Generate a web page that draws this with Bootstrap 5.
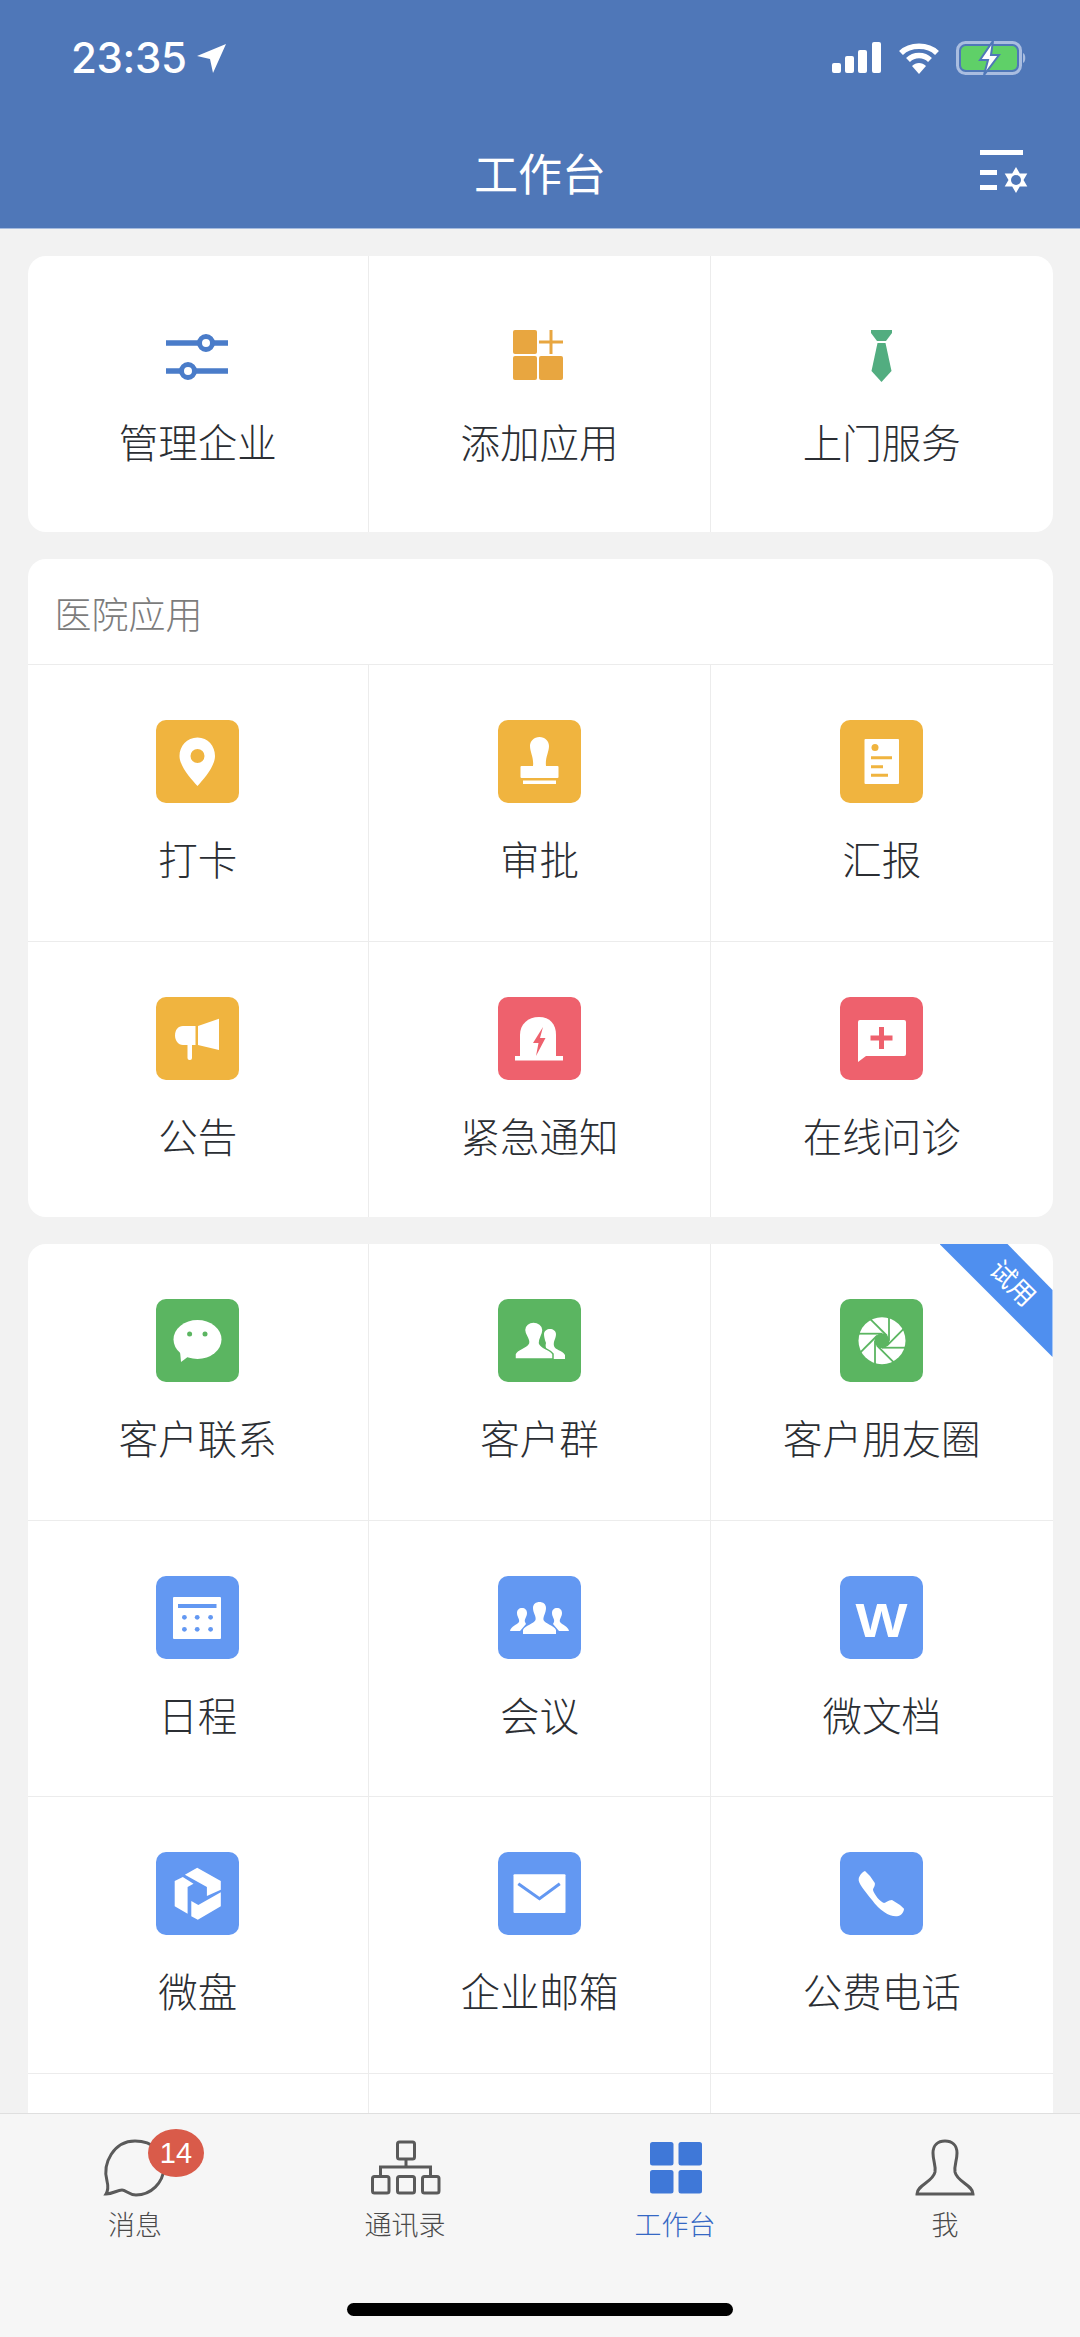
<!DOCTYPE html>
<html lang="zh">
<head>
    <meta charset="UTF-8">
    <meta name="viewport" content="width=device-width, initial-scale=1.0">
    <title>工作台</title>
    <link rel="stylesheet" href="https://cdn.jsdelivr.net/npm/bootstrap@5.3.0/dist/css/bootstrap.min.css">
    <style>
        html, body { height: 2337px; overflow: hidden; }
        body { background: #f2f2f2; font-family: "Liberation Sans", "Noto Sans CJK SC", sans-serif; color: #3b3e43; }
        svg { display: block; }
        .app-shell { height: 2337px; }
        .top-head { background: #4f77b8; height: 229px; border-bottom: 1px solid #a5bbde; color: #fff; }
        .status-row { height: 116px; padding: 0 52px 0 71px; }
        .clock { font: 500 42px/1 Inter, "Liberation Sans", sans-serif; letter-spacing: -.3px; }
        .title-row { height: 112px; display: grid; grid-template-columns: 1fr auto 1fr; padding: 0 52px; }
        .title-row h1 { font: 400 44px/1 "Noto Sans CJK SC", sans-serif; margin: 0; }
        .page-body { padding: 27px 27.5px 0; min-height: 0; overflow: hidden; }
        .work-card { background: #fff; border-radius: 18px; overflow: hidden; margin-bottom: 27px; position: relative; flex-shrink: 0; }
        .card-head { height: 105px; padding: 3px 0 0 27px; font: 300 37px/102px "Noto Sans CJK SC", sans-serif; color: #7c7c7c; }
        .cell-line { height: 276.5px; border-top: 1px solid #ececec; }
        .cell-line.no-line { border-top: 0; }
        .cell-line.short-line { height: 276px; }
        .cell-line.first-line { height: 275.5px; }
        .cell-item { padding-top: 55px; border-right: 1px solid #ececec; text-align: center; }
        .cell-item:last-child { border-right: 0; }
        .app-ico { width: 83px; height: 83px; border-radius: 10px; margin: 0 auto 30px; }
        .plain-ico { margin-bottom: 22px; }
        .cell-name { font: 300 39.5px/50px "Noto Sans CJK SC", sans-serif; color: #2b2e33; }
        .ico-yellow { background: #f0b43f; }
        .ico-red { background: #ee616d; }
        .ico-green { background: #5bb561; }
        .ico-blue { background: #6398f2; }
        .try-tag { position: absolute; top: 0; right: 0; width: 113px; height: 113px; background: #4f8fef; clip-path: polygon(0 0, 68px 0, 113px 46px, 113px 113px); }
        .try-tag span { position: absolute; left: 44px; top: 25px; width: 60px; text-align: center; color: #fff; font: 400 26px/26px "Noto Sans CJK SC", sans-serif; transform: rotate(45deg); white-space: nowrap; }
        .tab-bar { background: #f6f6f6; border-top: 1px solid #dfdfdf; height: 224px; flex-shrink: 0; }
        .tab-item { padding-top: 21px; position: relative; text-align: center; color: #4a4a4a; font: 300 27px/36px "Noto Sans CJK SC", sans-serif; }
        .tab-item svg { margin: 0 auto 6px; }
        .tab-on { color: #3568c4; }
        .tab-count { position: absolute; top: 15px; left: 148px; width: 56px; height: 48px; border-radius: 50%; background: #d95b4a; color: #fff; font: 400 29px/48px "Liberation Sans", sans-serif; }
        .home-bar { width: 386px; height: 13px; border-radius: 7px; background: #000; margin: 61px auto 0; }
    </style>
</head>
<body>
<div class="app-shell d-flex flex-column">

    <!-- Header -->
    <header class="top-head flex-shrink-0">
        <div class="status-row d-flex align-items-center justify-content-between">
            <div class="d-flex align-items-center gap-2">
                <span class="clock">23:35</span>
                <svg width="32" height="32" viewBox="0 0 32 32"><path d="M31 2 L2 14 L15 17 L18 31 Z" fill="#fff"/></svg>
            </div>
            <div class="d-flex align-items-center">
                <svg width="50" height="32" viewBox="0 0 50 32" class="me-3" fill="#fff">
                    <rect x="0" y="21" width="9" height="10" rx="2"/><rect x="13" y="14" width="9" height="17" rx="2"/><rect x="26" y="8" width="9" height="23" rx="2"/><rect x="40" y="0" width="9" height="31" rx="2"/>
                </svg>
                <svg width="42" height="32" viewBox="0 0 42 32" class="me-3" fill="none" stroke="#fff" stroke-width="5.500">
                    <path d="M3 11 C12 2 30 2 39 11"/><path d="M10 18 C16 12 26 12 32 18"/><path d="M21 32 L14 24 C18 20 24 20 28 24 Z" fill="#fff" stroke="none"/>
                </svg>
                <svg width="72" height="34" viewBox="0 0 72 34">
                    <rect x="1.500" y="1.500" width="63" height="31" rx="8" fill="none" stroke="#a9bde0" stroke-width="3"/>
                    <path d="M67 12 C70 13 70 21 67 22 Z" fill="#a9bde0"/>
                    <rect x="5" y="5" width="56" height="24" rx="5" fill="#5fd068"/>
                    <path d="M37 0 L24 19 L32 19 L28 34 L43 14 L35 14 Z" fill="#fff" stroke="#4f77b8" stroke-width="2"/>
                </svg>
            </div>
        </div>
        <div class="title-row align-items-center">
            <span></span>
            <h1>工作台</h1>
            <svg class="ms-auto" width="50" height="48" viewBox="0 0 50 48" fill="#fff">
                <rect x="2" y="2" width="43" height="5"/><rect x="2" y="22" width="17" height="5"/><rect x="2" y="37" width="17" height="5"/>
                <path d="M38 19 L41.800 25.500 L49.300 25.500 L45.500 32 L49.300 38.500 L41.800 38.500 L38 45 L34.200 38.500 L26.700 38.500 L30.500 32 L26.700 25.500 L34.200 25.500 Z"/>
                <circle cx="38" cy="32" r="5" fill="#4f77b8"/>
            </svg>
        </div>
    </header>

    <!-- Content -->
    <main class="page-body flex-grow-1 d-flex flex-column">

        <section class="work-card">
            <div class="row g-0 cell-line no-line short-line">
                <div class="col-4 cell-item">
                    <div class="app-ico plain-ico">
                        <svg width="83" height="83" viewBox="0 0 83 83" fill="none" stroke="#4a7cc9">
                            <path d="M10 32 H72 M10 60 H72" stroke-width="5.500"/>
                            <circle cx="50" cy="32" r="6.500" fill="#fff" stroke-width="5"/>
                            <circle cx="32" cy="60" r="6.500" fill="#fff" stroke-width="5"/>
                        </svg>
                    </div>
                    <div class="cell-name">管理企业</div>
                </div>
                <div class="col-4 cell-item">
                    <div class="app-ico plain-ico">
                        <svg width="83" height="83" viewBox="0 0 83 83" fill="#e8a640">
                            <rect x="15" y="19" width="24" height="24" rx="2"/><rect x="15" y="45" width="24" height="24" rx="2"/><rect x="41" y="45" width="24" height="24" rx="2"/>
                            <path d="M41 29.500 H65 V32.500 H41 Z M51.500 19 H54.500 V43 H51.500 Z"/>
                        </svg>
                    </div>
                    <div class="cell-name">添加应用</div>
                </div>
                <div class="col-4 cell-item">
                    <div class="app-ico plain-ico">
                        <svg width="83" height="83" viewBox="0 0 83 83" fill="#52ad80">
                            <path d="M31 19 H52 L52 22 L46 30 H37 L31 22 Z"/>
                            <path d="M37.500 32 H45.500 L51.500 60 L41.500 71 L31.500 60 Z"/>
                        </svg>
                    </div>
                    <div class="cell-name">上门服务</div>
                </div>
            </div>
        </section>

        <section class="work-card">
            <div class="card-head">医院应用</div>
            <div class="row g-0 cell-line">
                <div class="col-4 cell-item">
                    <div class="app-ico ico-yellow">
                        <svg width="83" height="83" viewBox="0 0 83 83"><path fill="#fff" fill-rule="evenodd" d="M41.500 17.500 C31 17.500 23.500 26 23.500 36 C23.500 46 35 59 41.500 66 C48 59 59 46 59 36 C59 26 52 17.500 41.500 17.500 Z M41.500 29 A7 7 0 1 1 41.500 43 A7 7 0 1 1 41.500 29 Z"/></svg>
                    </div>
                    <div class="cell-name">打卡</div>
                </div>
                <div class="col-4 cell-item">
                    <div class="app-ico ico-yellow">
                        <svg width="83" height="83" viewBox="0 0 83 83" fill="#fff">
                            <path d="M41.500 17 C36 17 32 21 32 26 C32 32 36 38 35 46 H48 C47 38 51 32 51 26 C51 21 47 17 41.500 17 Z"/>
                            <rect x="22.500" y="46" width="38" height="12" rx="1"/><rect x="25" y="60.500" width="33" height="3.500"/>
                        </svg>
                    </div>
                    <div class="cell-name">审批</div>
                </div>
                <div class="col-4 cell-item">
                    <div class="app-ico ico-yellow">
                        <svg width="83" height="83" viewBox="0 0 83 83">
                            <rect x="24.500" y="19" width="34.500" height="45" rx="1" fill="#fff"/>
                            <circle cx="35" cy="27.500" r="3.500" fill="#f0b43f"/>
                            <path d="M31 37.700 H52 M31 46.700 H43 M31 55.300 H48" stroke="#f0b43f" stroke-width="3"/>
                        </svg>
                    </div>
                    <div class="cell-name">汇报</div>
                </div>
            </div>
            <div class="row g-0 cell-line">
                <div class="col-4 cell-item">
                    <div class="app-ico ico-yellow">
                        <svg width="83" height="83" viewBox="0 0 83 83" fill="#fff">
                            <path d="M27 29 H39.500 V48 H27 C22 48 19 43 19 38.500 C19 33 22 29 27 29 Z"/>
                            <path d="M42 29 L63 21.700 V53 L42 48 Z"/>
                            <rect x="31.500" y="46" width="4.500" height="17" rx="2"/>
                        </svg>
                    </div>
                    <div class="cell-name">公告</div>
                </div>
                <div class="col-4 cell-item">
                    <div class="app-ico ico-red">
                        <svg width="83" height="83" viewBox="0 0 83 83">
                            <path fill="#fff" d="M22 59 V38 C22 27 30 20 41 20 C52 20 58 27 58 38 V59 Z"/>
                            <rect x="17" y="59" width="48" height="4.500" fill="#fff"/>
                            <path fill="#ee616d" d="M45 30 L35 46 L40.500 46 L38 59 L47.500 41 L42 41 Z"/>
                        </svg>
                    </div>
                    <div class="cell-name">紧急通知</div>
                </div>
                <div class="col-4 cell-item">
                    <div class="app-ico ico-red">
                        <svg width="83" height="83" viewBox="0 0 83 83">
                            <path fill="#fff" d="M20 23 H64 A2 2 0 0 1 66 25 V57 A2 2 0 0 1 64 59 H26 L18 65 V25 A2 2 0 0 1 20 23 Z"/>
                            <path fill="#ee616d" d="M39 30 H44 V38.500 H52.500 V43.500 H44 V52 H39 V43.500 H30.500 V38.500 H39 Z"/>
                        </svg>
                    </div>
                    <div class="cell-name">在线问诊</div>
                </div>
            </div>
        </section>

        <section class="work-card">
            <div class="row g-0 cell-line no-line first-line">
                <div class="col-4 cell-item">
                    <div class="app-ico ico-green">
                        <svg width="83" height="83" viewBox="0 0 83 83">
                            <ellipse cx="41.500" cy="40.500" rx="24" ry="19.500" fill="#fff"/>
                            <path fill="#fff" d="M24 52 L25 63 L33 57 Z"/>
                            <circle cx="33.600" cy="35" r="2.500" fill="#5bb561"/><circle cx="49" cy="35" r="2.500" fill="#5bb561"/>
                        </svg>
                    </div>
                    <div class="cell-name">客户联系</div>
                </div>
                <div class="col-4 cell-item">
                    <div class="app-ico ico-green">
                        <svg width="83" height="83" viewBox="0 0 83 83" fill="#fff">
                            <path d="M50 60 V56 C50 52 46.500 48.500 48 44 C46.500 40 46 37 46 35 C46 32 49 30 52 30 C55 30 58 32 58 35 C58 40 55 42 56 47 C57 51 64 51 67 56 V60 Z"/>
                            <path stroke="#5bb561" stroke-width="1.500" d="M17 60 V55 C19 49 29 49 30.500 44 C31.500 40 26.500 36 26.500 31 C26.500 26 31 23 35.500 23 C40 23 45 26 45 31 C45 36 41 40 41.500 44 C42.500 49 52 50 55 55 V60 Z"/>
                        </svg>
                    </div>
                    <div class="cell-name">客户群</div>
                </div>
                <div class="col-4 cell-item">
                    <div class="app-ico ico-green">
                        <svg width="83" height="83" viewBox="0 0 83 83">
                            <circle cx="42" cy="41.700" r="23.500" fill="#fff"/>
                            <g stroke="#5bb561" stroke-width="1.800">
                                <path d="M49 41.700 V16"/>
                                <path d="M49 41.700 V16" transform="rotate(45 42 41.700)"/>
                                <path d="M49 41.700 V16" transform="rotate(90 42 41.700)"/>
                                <path d="M49 41.700 V16" transform="rotate(135 42 41.700)"/>
                                <path d="M49 41.700 V16" transform="rotate(180 42 41.700)"/>
                                <path d="M49 41.700 V16" transform="rotate(225 42 41.700)"/>
                                <path d="M49 41.700 V16" transform="rotate(270 42 41.700)"/>
                                <path d="M49 41.700 V16" transform="rotate(315 42 41.700)"/>
                            </g>
                            <circle cx="42" cy="41.700" r="7.500" fill="#5bb561"/>
                        </svg>
                    </div>
                    <div class="cell-name">客户朋友圈</div>
                </div>
            </div>
            <div class="row g-0 cell-line">
                <div class="col-4 cell-item">
                    <div class="app-ico ico-blue">
                        <svg width="83" height="83" viewBox="0 0 83 83">
                            <rect x="17" y="21" width="48" height="42" rx="1" fill="#fff"/>
                            <rect x="22" y="28" width="38.500" height="4" fill="#6398f2"/>
                            <g fill="#6398f2">
                                <circle cx="28.400" cy="41.300" r="2.400"/><circle cx="41.200" cy="41.300" r="2.400"/><circle cx="54.600" cy="41.300" r="2.400"/>
                                <circle cx="28.400" cy="53.300" r="2.400"/><circle cx="41.200" cy="53.300" r="2.400"/><circle cx="54.600" cy="53.300" r="2.400"/>
                            </g>
                        </svg>
                    </div>
                    <div class="cell-name">日程</div>
                </div>
                <div class="col-4 cell-item">
                    <div class="app-ico ico-blue">
                        <svg width="83" height="83" viewBox="0 0 83 83" fill="#fff">
                            <path d="M12 55 C13 50 19 49 21 46 C22 43 19 41 19 37 C19 34 21 32 24 32 C27 32 29 34 29 37 C29 41 26 43 27 46 L28 48 L22 55 Z"/>
                            <path d="M71 55 C70 50 64 49 62 46 C61 43 64 41 64 37 C64 34 62 32 59 32 C56 32 54 34 54 37 C54 41 57 43 56 46 L55 48 L61 55 Z"/>
                            <path d="M25 58 V54 C27 49 36 48 37.500 44 C38.500 40 35 37 35 32 C35 28 38 26 41.500 26 C45 26 48 28 48 32 C48 37 45 40 45.500 44 C47 48 56 49 58 54 V58 Z"/>
                        </svg>
                    </div>
                    <div class="cell-name">会议</div>
                </div>
                <div class="col-4 cell-item">
                    <div class="app-ico ico-blue">
                        <svg width="83" height="83" viewBox="0 0 83 83"><text x="15.500" y="60.500" font-family="Liberation Sans" font-weight="700" font-size="49" textLength="52" lengthAdjust="spacingAndGlyphs" fill="#fff">W</text></svg>
                    </div>
                    <div class="cell-name">微文档</div>
                </div>
            </div>
            <div class="row g-0 cell-line">
                <div class="col-4 cell-item">
                    <div class="app-ico ico-blue">
                        <svg width="83" height="83" viewBox="0 0 83 83" fill="#fff">
                            <path d="M41.200 15.700 L64.800 29 V37.700 L50.900 44 V35 L28.900 22.700 Z"/>
                            <path d="M26.800 25 L37.500 31.700 L31.600 35 V61.700 L18.700 54.300 V29 Z"/>
                            <path d="M64.800 40.300 V54.300 L41.800 67.700 L35.300 64.300 V49 L42.300 53 Z"/>
                        </svg>
                    </div>
                    <div class="cell-name">微盘</div>
                </div>
                <div class="col-4 cell-item">
                    <div class="app-ico ico-blue">
                        <svg width="83" height="83" viewBox="0 0 83 83">
                            <rect x="15.500" y="22.300" width="52" height="38.700" rx="1" fill="#fff"/>
                            <path d="M20.300 31.700 L41.500 46.700 L61.800 31.700" fill="none" stroke="#6398f2" stroke-width="3"/>
                        </svg>
                    </div>
                    <div class="cell-name">企业邮箱</div>
                </div>
                <div class="col-4 cell-item">
                    <div class="app-ico ico-blue">
                        <svg width="83" height="83" viewBox="0 0 83 83"><path fill="#fff" d="M25 19 L30 24 L34.800 31 C35.500 34 33 36 33 38 C34 42 40 50 44 51 C46 51 48 48 52 48 L60 53 L64 56.700 C64 60 61 64 57 64.300 C50 65 40 59 32 48 C24 38 18 31 18.700 27 C19 24 22 20 25 19 Z"/></svg>
                    </div>
                    <div class="cell-name">公费电话</div>
                </div>
            </div>
            <div class="row g-0 cell-line">
                <div class="col-4 cell-item"></div>
                <div class="col-4 cell-item"></div>
                <div class="col-4 cell-item"></div>
            </div>
            <div class="try-tag"><span>试用</span></div>
        </section>
    </main>

    <!-- Tabs -->
    <footer class="tab-bar">
        <div class="row g-0">
            <div class="col-3 tab-item">
                <svg width="80" height="65" viewBox="0 0 80 65" fill="none" stroke="#5a5a5a" stroke-width="3">
                    <path d="M11 59 C14 54 13 50 12 46 C7 28 19 6 40 6 C58 6 70 18 69 33 C68 48 56 60 41 60 C34 60 31 55 27 55 C22 55 18 59 11 59 Z"/>
                </svg>
                <div>消息</div>
                <span class="tab-count">14</span>
            </div>
            <div class="col-3 tab-item">
                <svg width="80" height="65" viewBox="0 0 80 65" fill="none" stroke="#5a5a5a" stroke-width="3">
                    <rect x="32.500" y="7" width="17" height="17" rx="2"/>
                    <path d="M41 24 V32 M15.500 41 V32 H65.500 V41"/>
                    <rect x="7.500" y="41.500" width="16.500" height="16.500" rx="2"/><rect x="32.500" y="41.500" width="17" height="16.500" rx="2"/><rect x="57.500" y="41.500" width="16.500" height="16.500" rx="2"/>
                </svg>
                <div>通讯录</div>
            </div>
            <div class="col-3 tab-item tab-on">
                <svg width="80" height="65" viewBox="0 0 80 65" fill="#3f78d8">
                    <rect x="15" y="7" width="23.500" height="23.500" rx="2.500"/><rect x="43.500" y="7" width="23.500" height="23.500" rx="2.500"/>
                    <rect x="15" y="35" width="23.500" height="23.500" rx="2.500"/><rect x="43.500" y="35" width="23.500" height="23.500" rx="2.500"/>
                </svg>
                <div>工作台</div>
            </div>
            <div class="col-3 tab-item">
                <svg width="80" height="65" viewBox="0 0 80 65" fill="none" stroke="#5a5a5a" stroke-width="3">
                    <path d="M12 59 C12 50 28 47 30 37 C31 30 28 26 28 18 C28 10 33 6 40 6 C47 6 52 10 52 18 C52 26 49 30 50 37 C52 47 68 50 68 59 Z"/>
                </svg>
                <div>我</div>
            </div>
        </div>
        <div class="home-bar"></div>
    </footer>
</div>
<script src="https://cdn.jsdelivr.net/npm/bootstrap@5.3.0/dist/js/bootstrap.bundle.min.js"></script>
</body>
</html>
